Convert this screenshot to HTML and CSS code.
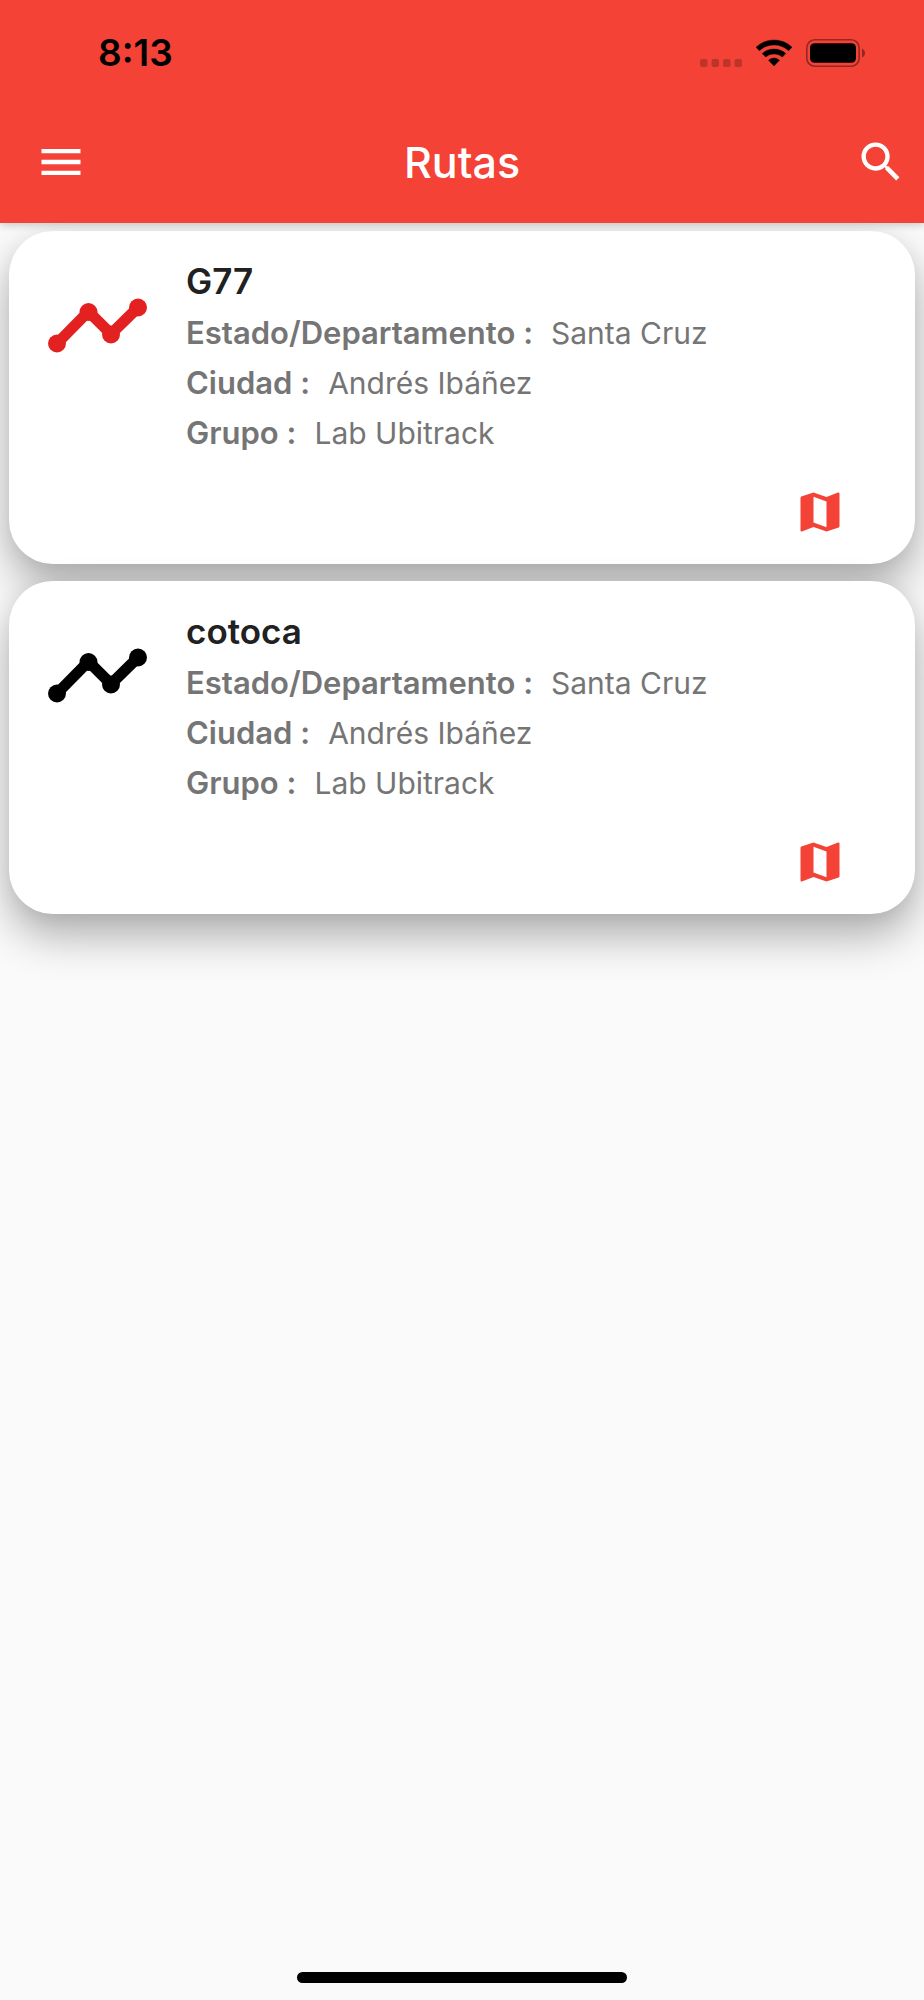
FILE: index.html
```html
<!DOCTYPE html>
<html lang="es">
<head>
<meta charset="utf-8">
<meta name="viewport" content="width=device-width, initial-scale=1">
<title>Rutas</title>
<link rel="stylesheet" href="styles.css">
</head>
<body>
<header class="header">
  <div class="status">
    <time class="clock">8:13</time>
    <div class="indicators">
      <svg class="signal" width="42" height="28" viewBox="0 0 42 28" aria-hidden="true"><g fill="#000" opacity=".22"><rect x="0" y="20" width="7.500" height="8" rx="2"/><rect x="11.500" y="20" width="7.500" height="8" rx="2"/><rect x="23" y="20" width="7.500" height="8" rx="2"/><rect x="34.500" y="20" width="7.500" height="8" rx="2"/></g></svg>
      <svg class="wifi" width="36" height="28" viewBox="0 0 36 28" aria-hidden="true"><path d="M0 8.200Q7.500 1 18 1T36 8.200L32.600 11.700Q26.500 6 18 6T3.400 11.700ZM6.200 14.500Q11 10 18 10T29.800 14.500L26.300 18Q23 15 18 15T9.700 18ZM12.500 21.200Q15 19 18 19T23.500 21.200L18 27Z" stroke="#000" stroke-width=".4" stroke-linejoin="round"/></svg>
      <svg class="battery" width="60" height="28" viewBox="0 0 60 28" aria-hidden="true"><rect x=".8" y=".8" width="52.400" height="26.400" rx="8" fill="none" stroke="#000" stroke-opacity=".4" stroke-width="1.600"/><rect x="4" y="4.200" width="46" height="19.600" rx="4.500"/><path d="M56 9.500Q59 11 59 14T56 18.500Z" opacity=".4"/></svg>
    </div>
  </div>
  <div class="toolbar">
    <button class="icon-button" type="button" aria-label="Menú"><svg class="icon" viewBox="0 0 24 24"><path d="M3 18h18v-2H3v2zm0-5h18v-2H3v2zm0-7v2h18V6H3z"/></svg></button>
    <h1 class="title">Rutas</h1>
    <button class="icon-button" type="button" aria-label="Buscar"><svg class="icon" viewBox="0 0 24 24"><path d="M15.500 14h-.79l-.28-.27A6.471 6.471 0 0 0 16 9.500 6.500 6.500 0 1 0 9.500 16c1.610 0 3.090-.59 4.230-1.570l.27.28v.79l5 4.990L20.490 19l-4.990-5zm-6 0C7.010 14 5 11.990 5 9.500S7.010 5 9.500 5 14 7.010 14 9.500 11.990 14 9.500 14z"/></svg></button>
  </div>
</header>
<main class="routes">
  <article class="card">
    <svg class="route-icon route-red" viewBox="0 0 100 56" aria-hidden="true"><path d="M9 45.500 40.500 13.500 63 36 90 9.500"/><circle cx="9" cy="45.500" r="9"/><circle cx="40.500" cy="14" r="9"/><circle cx="63" cy="36.500" r="9"/><circle cx="90" cy="9.500" r="9"/></svg>
    <div class="details">
      <h2 class="name">G77</h2>
      <dl class="facts">
        <div class="fact"><dt>Estado/Departamento :</dt><dd>Santa Cruz</dd></div>
        <div class="fact"><dt>Ciudad :</dt><dd>Andrés Ibáñez</dd></div>
        <div class="fact"><dt>Grupo :</dt><dd>Lab Ubitrack</dd></div>
      </dl>
    </div>
    <button class="icon-button map-button" type="button" aria-label="Ver G77 en el mapa"><svg class="icon" viewBox="0 0 24 24"><path d="M20.500 3l-.16.03L15 5.100 9 3 3.360 4.900c-.21.07-.36.25-.36.48V20.500c0 .28.22.5.5.5l.16-.03L9 18.900l6 2.100 5.640-1.900c.21-.07.36-.25.36-.48V3.500c0-.28-.22-.5-.5-.5zM15 19l-6-2.110V5l6 2.110V19z"/></svg></button>
  </article>
  <article class="card">
    <svg class="route-icon route-black" viewBox="0 0 100 56" aria-hidden="true"><path d="M9 45.500 40.500 13.500 63 36 90 9.500"/><circle cx="9" cy="45.500" r="9"/><circle cx="40.500" cy="14" r="9"/><circle cx="63" cy="36.500" r="9"/><circle cx="90" cy="9.500" r="9"/></svg>
    <div class="details">
      <h2 class="name">cotoca</h2>
      <dl class="facts">
        <div class="fact"><dt>Estado/Departamento :</dt><dd>Santa Cruz</dd></div>
        <div class="fact"><dt>Ciudad :</dt><dd>Andrés Ibáñez</dd></div>
        <div class="fact"><dt>Grupo :</dt><dd>Lab Ubitrack</dd></div>
      </dl>
    </div>
    <button class="icon-button map-button" type="button" aria-label="Ver cotoca en el mapa"><svg class="icon" viewBox="0 0 24 24"><path d="M20.500 3l-.16.03L15 5.100 9 3 3.360 4.900c-.21.07-.36.25-.36.48V20.500c0 .28.22.5.5.5l.16-.03L9 18.900l6 2.100 5.640-1.900c.21-.07.36-.25.36-.48V3.500c0-.28-.22-.5-.5-.5zM15 19l-6-2.110V5l6 2.110V19z"/></svg></button>
  </article>
</main>
<footer class="footer"><div class="home-indicator"></div></footer>
</body>
</html>
```
FILE: styles.css
```css
* { box-sizing: border-box; }
body {
  margin: 0;
  min-height: 100vh;
  display: flex;
  flex-direction: column;
  background: #fafafa;
  font-family: Inter, "Liberation Sans", sans-serif;
  overflow-x: hidden;
}
h1, h2, dl, dd { margin: 0; }
.header {
  position: relative;
  z-index: 1;
  background: #f44336;
  box-shadow: 0 2px 8px rgba(0, 0, 0, .2);
}
.status {
  display: flex;
  justify-content: space-between;
  align-items: center;
  height: 101px;
  padding: 4px 58px 0 98px;
}
.clock { font-size: 37px; font-weight: 600; line-height: 44px; }
.indicators { display: flex; align-items: center; gap: 14px; }
.toolbar {
  display: flex;
  justify-content: space-between;
  align-items: center;
  height: 122px;
  padding: 0 17px 0 35px;
}
.title {
  flex: 1;
  padding-right: 18px;
  color: #fff;
  font-size: 43px;
  font-weight: 500;
  line-height: 50px;
  text-align: center;
}
.icon-button {
  display: block;
  padding: 0;
  border: 0;
  background: none;
  color: #fff;
  cursor: pointer;
}
.icon { display: block; width: 52px; height: 52px; fill: currentColor; }
.routes {
  flex: 1;
  display: flex;
  flex-direction: column;
  gap: 17px;
  padding: 8px 9px;
}
.card {
  display: grid;
  grid-template-columns: 100px 1fr;
  column-gap: 38px;
  align-items: start;
  padding: 24px 69px 26px 39px;
  border-radius: 44px;
  background: #fff;
  box-shadow: 0 22px 44px rgba(0, 0, 0, .3), 0 4px 20px rgba(0, 0, 0, .06);
}
.route-icon { width: 100px; height: 56px; margin-top: 43px; }
.route-icon path { fill: none; stroke: currentColor; stroke-width: 11; }
.route-icon circle { fill: currentColor; }
.route-red { color: #e32121; }
.route-black { color: #000; }
.name { color: #212121; font-size: 35px; font-weight: 600; line-height: 53px; }
.fact {
  display: flex;
  flex-wrap: wrap;
  align-items: baseline;
  column-gap: 18px;
  color: #757575;
  font-size: 30px;
  line-height: 50px;
}
.fact dt { font-size: 31px; font-weight: 600; }
.fact dd { font-weight: 400; }
.map-button { grid-column: 2; justify-self: end; margin-top: 28px; color: #f44336; }
.footer { display: flex; justify-content: center; padding: 12px 0 17px; }
.home-indicator { width: 36%; max-width: 330px; height: 11px; border-radius: 6px; background: #000; }
```
